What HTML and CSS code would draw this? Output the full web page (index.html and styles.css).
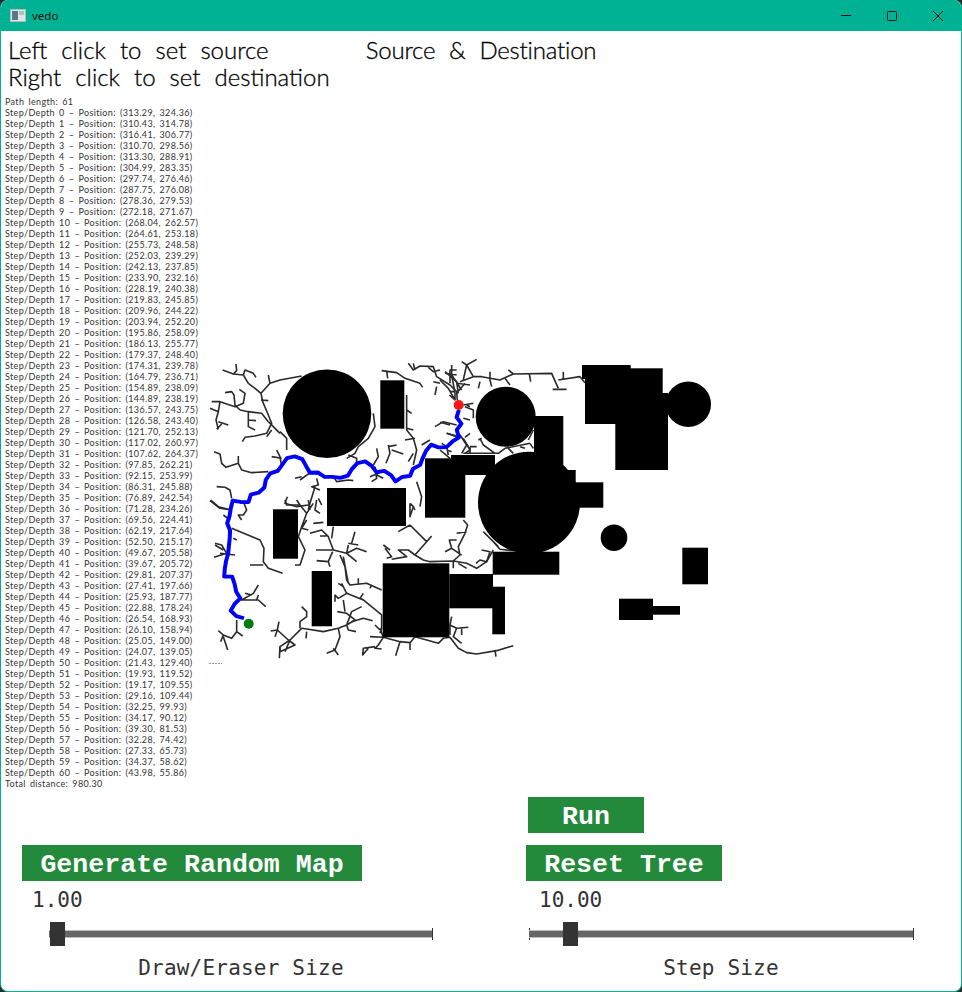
FILE: index.html
```html
<!DOCTYPE html>
<html lang="en">
<head>
    <meta charset="UTF-8">
    <meta name="viewport" content="width=device-width, initial-scale=1.0">
    <title>vedo</title>
    <link rel="stylesheet" href="styles.css">
</head>
<body>
    <div class="window">
        <header class="titlebar">
            <svg class="app-icon" width="16" height="13" viewBox="0 0 16 13">
                <rect x="0.5" y="0.5" width="15" height="12" fill="#dfe8e8" stroke="#aebcbc"/>
                <rect x="2" y="2" width="6" height="9" fill="#56788f"/>
                <rect x="9" y="2" width="5" height="4" fill="#a9c4bb"/>
            </svg>
            <span class="app-name">vedo</span>
            <div class="win-buttons">
                <svg width="12" height="12" viewBox="0 0 12 12"><path d="M1 5.5H11"/></svg>
                <svg width="12" height="12" viewBox="0 0 12 12"><rect x="1.5" y="1.5" width="9" height="9" rx="1"/></svg>
                <svg width="12" height="12" viewBox="0 0 12 12"><path d="M1 1L11 11M11 1L1 11"/></svg>
            </div>
        </header>

        <div class="headings">
            <h1>Left click to set source<br>Right click to set destination</h1>
            <h2>Source &amp; Destination</h2>
        </div>

        <div class="middle">
            <pre class="log">Path length: 61
Step/Depth 0 – Position: (313.29, 324.36)
Step/Depth 1 – Position: (310.43, 314.78)
Step/Depth 2 – Position: (316.41, 306.77)
Step/Depth 3 – Position: (310.70, 298.56)
Step/Depth 4 – Position: (313.30, 288.91)
Step/Depth 5 – Position: (304.99, 283.35)
Step/Depth 6 – Position: (297.74, 276.46)
Step/Depth 7 – Position: (287.75, 276.08)
Step/Depth 8 – Position: (278.36, 279.53)
Step/Depth 9 – Position: (272.18, 271.67)
Step/Depth 10 – Position: (268.04, 262.57)
Step/Depth 11 – Position: (264.61, 253.18)
Step/Depth 12 – Position: (255.73, 248.58)
Step/Depth 13 – Position: (252.03, 239.29)
Step/Depth 14 – Position: (242.13, 237.85)
Step/Depth 15 – Position: (233.90, 232.16)
Step/Depth 16 – Position: (228.19, 240.38)
Step/Depth 17 – Position: (219.83, 245.85)
Step/Depth 18 – Position: (209.96, 244.22)
Step/Depth 19 – Position: (203.94, 252.20)
Step/Depth 20 – Position: (195.86, 258.09)
Step/Depth 21 – Position: (186.13, 255.77)
Step/Depth 22 – Position: (179.37, 248.40)
Step/Depth 23 – Position: (174.31, 239.78)
Step/Depth 24 – Position: (164.79, 236.71)
Step/Depth 25 – Position: (154.89, 238.09)
Step/Depth 26 – Position: (144.89, 238.19)
Step/Depth 27 – Position: (136.57, 243.75)
Step/Depth 28 – Position: (126.58, 243.40)
Step/Depth 29 – Position: (121.70, 252.13)
Step/Depth 30 – Position: (117.02, 260.97)
Step/Depth 31 – Position: (107.62, 264.37)
Step/Depth 32 – Position: (97.85, 262.21)
Step/Depth 33 – Position: (92.15, 253.99)
Step/Depth 34 – Position: (86.31, 245.88)
Step/Depth 35 – Position: (76.89, 242.54)
Step/Depth 36 – Position: (71.28, 234.26)
Step/Depth 37 – Position: (69.56, 224.41)
Step/Depth 38 – Position: (62.19, 217.64)
Step/Depth 39 – Position: (52.50, 215.17)
Step/Depth 40 – Position: (49.67, 205.58)
Step/Depth 41 – Position: (39.67, 205.72)
Step/Depth 42 – Position: (29.81, 207.37)
Step/Depth 43 – Position: (27.41, 197.66)
Step/Depth 44 – Position: (25.93, 187.77)
Step/Depth 45 – Position: (22.88, 178.24)
Step/Depth 46 – Position: (26.54, 168.93)
Step/Depth 47 – Position: (26.10, 158.94)
Step/Depth 48 – Position: (25.05, 149.00)
Step/Depth 49 – Position: (24.07, 139.05)
Step/Depth 50 – Position: (21.43, 129.40)
Step/Depth 51 – Position: (19.93, 119.52)
Step/Depth 52 – Position: (19.17, 109.55)
Step/Depth 53 – Position: (29.16, 109.44)
Step/Depth 54 – Position: (32.25, 99.93)
Step/Depth 55 – Position: (34.17, 90.12)
Step/Depth 56 – Position: (39.30, 81.53)
Step/Depth 57 – Position: (32.28, 74.42)
Step/Depth 58 – Position: (27.33, 65.73)
Step/Depth 59 – Position: (34.37, 58.62)
Step/Depth 60 – Position: (43.98, 55.86)
Total distance: 980.30</pre>

            <!-- viewBox uses window coordinates so the map reads like the screenshot -->
            <svg class="map" width="520" height="320" viewBox="204 355 520 320">
                <!-- tree branches, traced at 3x from the left, lower and right parts of the map -->
                <g class="tree" transform="translate(200 350) scale(0.3333)">
                    <path d="M68 60 100 72 130 75 145 100 165 115 183 130 188 155 205 195 215 220 200 250 165 258 135 262 127 275"/>
                    <path d="M108 42 110 62 100 72M130 75 135 60 160 70 168 82M183 130 210 100 240 90 305 78M210 100 205 75M183 150 205 152"/>
                    <path d="M75 128 95 125 102 135 105 165 120 180M118 118 135 130 130 160 105 170 60 155 35 155M60 155 55 185 30 175M55 185 48 210 55 238M55 215 85 225M65 222 50 238"/>
                    <path d="M120 180 145 185 185 190 205 215M145 185 145 230 165 240M145 210 168 212"/>
                    <path d="M205 215 240 250M215 240 200 260M240 245 260 265 260 300M230 300 240 320 245 350M215 320 245 325"/>
                    <path d="M42 305 60 312 65 340 78 352 115 340 125 360 155 368 205 365M115 318 115 340"/>
                    <path d="M50 410 75 412 90 420 95 445M30 452 60 475 95 480"/>
                    <path d="M520 190 525 230 505 265 475 290 465 310 440 325M445 315 470 325 470 345"/>
                    <path d="M565 285 570 310 558 340M575 300 610 312M565 290 590 285M530 295 535 320 520 345M525 350 530 385 515 395M530 375 550 385M510 380 545 365"/>
                    <path d="M350 385 355 405 335 410 360 420M345 410 330 460 325 480M355 445 365 465M300 390 335 365 360 375M285 385 305 380M262 440 255 460 290 470 325 465"/>
                    <path d="M400 380 410 395 445 390 460 392"/>
                    <path d="M620 135 620 240 640 265 650 300 640 345M620 180 635 190M620 235 640 240M615 270 645 265M640 310 625 335M665 285 690 270"/>
                    <path d="M650 395 665 440 660 470M645 480 640 470"/>
                    <path d="M545 62 590 68 615 85 660 100 668 112M560 62 563 85M625 40 640 60 660 48 700 50 710 80 750 105 770 125 772 150M680 48 700 65 720 60M640 40 645 60M700 95 720 100M710 110 705 135"/>
                    <path d="M750 100 750 60 770 60M735 65 770 95 775 130M750 125 765 125M770 100 810 105M800 45 790 90M795 100 770 130"/>
                    <path d="M705 230 730 215 770 225M740 250 770 260M810 250 795 262M790 265 810 300 795 310M800 165 810 170M790 205 810 210"/>
                    <path d="M725 280 740 290 745 315M740 300 755 305"/>
                </g>
                <g class="tree" transform="translate(200 500) scale(0.3333)">
                    <path d="M32 0 55 20 85 28M70 45 90 60M130 5 140 30 130 45 115 45 125 60M95 85 180 120 192 145 190 185 205 205 248 220M150 195 190 195M100 115 110 120"/>
                    <path d="M45 130 65 135 80 160 42 172M60 160 105 165M45 135 70 150"/>
                    <path d="M175 255 160 280 125 300 175 300 197 320M175 285 170 300M135 280 155 285"/>
                    <path d="M110 360 110 395 95 415 70 405 55 392M70 405 62 425M70 410 83 450M110 395 128 408"/>
                    <path d="M255 0 260 15 300 15 320 40 340 10M290 0 300 15M325 0 330 30M320 40 305 80 295 110 315 150 300 195 285 195M350 0 345 30 360 40M340 70 370 67M320 60 305 85 325 90"/>
                    <path d="M330 100 365 90 385 110 400 150 440 160 470 145 500 155M400 80 395 115M360 108 380 108M348 150 370 150 400 150M350 182 385 185 398 155M385 185 390 200M440 160 470 185M455 130 465 95M445 130 475 135M440 160 445 135"/>
                    <path d="M420 165 435 200 440 240 450 255 500 250 545 270M430 170 445 250M475 235 475 255M515 255 510 265M425 250 440 280 415 295 405 285 405 305M415 250 430 260"/>
                    <path d="M440 280 490 300 545 345 545 385 540 400M490 280 480 295 490 300M430 300 435 335M412 335 440 340 465 360 440 375M485 320 455 335 440 375 415 385 370 395 325 388 305 385 270 420 240 440 238 475"/>
                    <path d="M455 365 490 355 518 362M440 375 445 390 468 395M415 385 420 410 405 450 380 460M400 445 415 465M320 395 318 415M305 320 320 335 320 350 300 365 300 385"/>
                    <path d="M237 365 232 390 212 393M232 390 225 410M232 390 265 420 285 435 240 455 240 440M270 420 255 455"/>
                    <path d="M510 410 550 412 600 425 630 428 645 410 715 430 730 415 750 412 775 445 800 458 830 462 890 452 940 437M600 425 587 467M630 428 630 450"/>
                    <path d="M550 412 535 435 525 445 545 447M525 440 490 445 488 465 505 445M550 412 540 385M525 375 540 390"/>
                    <path d="M755 350 750 375 770 385 805 382M750 375 750 405M785 385 785 405M770 385 760 410 785 430M885 450 888 470"/>
                    <path d="M630 10 630 50 640 20 630 10M630 75 595 95M630 75 680 125 695 108M680 125 645 165 625 150 595 150 620 170 575 178M645 165 670 180 690 185 760 183 800 190 830 205 860 185 880 150M570 150 550 135M555 145 575 170 560 175M760 183 760 205M775 190 800 205"/>
                    <path d="M790 60 803 75 795 100 775 140 780 165 760 183M770 100 800 95M770 120 748 120 755 145 735 155M755 145 785 165M850 95 880 125 900 148 940 152M845 150 870 155 860 185 840 180 828 190M880 125 895 140"/>
                </g>
                <g class="tree" transform="translate(440 350) scale(0.3333)">
                    <path d="M65 35 80 45 110 28M80 45 100 80 125 80 180 90 220 72 335 70 355 115M60 95 100 80M35 45 35 75 65 120M15 70 50 75M35 75 45 130 45 150 28 135M0 90 25 115 45 150"/>
                    <path d="M150 65 150 90 155 110M120 95 115 115M205 60 220 72M195 85 210 105M268 72 272 95M338 118 380 118M355 90 420 80 435 98M370 65 370 88"/>
                    <path d="M70 165 100 160M75 170 100 180 100 205M0 217 30 225M20 250 50 258 60 255 85 290M60 255 80 285 65 310M90 290 110 290M90 290 90 310"/>
                    <path d="M70 310 175 310 195 295 270 280M120 265 130 285 165 310M115 270 125 265M205 295 220 310M240 290 255 295M270 280 280 295M265 270 280 240M0 300 30 325"/>
                </g>

                <g class="obstacles">
                    <circle cx="327" cy="413.7" r="44.3"/>
                    <rect x="380.3" y="380.3" width="24" height="48.4"/>
                    <circle cx="505.7" cy="416.7" r="30"/>
                    <rect x="534" y="416" width="29.3" height="60"/>
                    <circle cx="529" cy="502.7" r="51"/>
                    <rect x="560" y="470" width="15.7" height="30"/>
                    <rect x="575" y="482.3" width="28.3" height="25.4"/>
                    <rect x="582" y="365" width="48.7" height="14"/>
                    <rect x="585" y="368.3" width="77.7" height="55.7"/>
                    <rect x="615.3" y="393" width="52.7" height="77"/>
                    <circle cx="688.3" cy="404.3" r="22.7"/>
                    <circle cx="614" cy="537.7" r="13.3"/>
                    <rect x="682.3" y="547.7" width="25.7" height="36.6"/>
                    <rect x="619" y="598.7" width="34" height="21.3"/>
                    <rect x="653" y="606" width="27" height="8.7"/>
                    <rect x="492.7" y="551.7" width="66.6" height="23"/>
                    <rect x="451" y="455" width="44" height="20"/>
                    <rect x="425" y="458.3" width="40.3" height="59.4"/>
                    <rect x="273" y="509.3" width="25" height="49.4"/>
                    <rect x="327" y="488" width="79" height="38"/>
                    <rect x="311.7" y="571" width="20.3" height="55.3"/>
                    <rect x="382.7" y="563.3" width="66.6" height="74"/>
                    <rect x="449.3" y="574" width="43.7" height="34.3"/>
                    <rect x="492.3" y="586.7" width="12.7" height="47.6"/>
                </g>

                <path class="origin" d="M209 663.5H222"/>

                <!-- the path is drawn from the logged positions -->
                <polyline class="route" transform="matrix(0.798 0 0 -0.776 208.9 661.6)" points="313.29,324.36 310.43,314.78 316.41,306.77 310.70,298.56 313.30,288.91 304.99,283.35 297.74,276.46 287.75,276.08 278.36,279.53 272.18,271.67 268.04,262.57 264.61,253.18 255.73,248.58 252.03,239.29 242.13,237.85 233.90,232.16 228.19,240.38 219.83,245.85 209.96,244.22 203.94,252.20 195.86,258.09 186.13,255.77 179.37,248.40 174.31,239.78 164.79,236.71 154.89,238.09 144.89,238.19 136.57,243.75 126.58,243.40 121.70,252.13 117.02,260.97 107.62,264.37 97.85,262.21 92.15,253.99 86.31,245.88 76.89,242.54 71.28,234.26 69.56,224.41 62.19,217.64 52.50,215.17 49.67,205.58 39.67,205.72 29.81,207.37 27.41,197.66 25.93,187.77 22.88,178.24 26.54,168.93 26.10,158.94 25.05,149.00 24.07,139.05 21.43,129.40 19.93,119.52 19.17,109.55 29.16,109.44 32.25,99.93 34.17,90.12 39.30,81.53 32.28,74.42 27.33,65.73 34.37,58.62 43.98,55.86"/>
                <circle class="source" cx="458.7" cy="405" r="5"/>
                <circle class="destination" cx="248.7" cy="623.7" r="5"/>
            </svg>
        </div>

        <div class="controls">
            <section class="panel panel-left">
                <button class="btn btn-wide">Generate Random Map</button>
                <div class="value">1.00</div>
                <div class="slider slider-left">
                    <span class="track"></span>
                    <span class="handle handle-left"></span>
                </div>
                <div class="caption">Draw/Eraser Size</div>
            </section>
            <section class="panel panel-right">
                <button class="btn btn-run">Run</button>
                <button class="btn btn-reset">Reset Tree</button>
                <div class="value">10.00</div>
                <div class="slider slider-right">
                    <span class="track"></span>
                    <span class="handle handle-right"></span>
                </div>
                <div class="caption">Step Size</div>
            </section>
        </div>
    </div>
</body>
</html>
```

FILE: styles.css
```css
* {
    box-sizing: border-box;
}
html, body {
    margin: 0;
    padding: 0;
    background-color: #2b2b2b;
    overflow: hidden;
}
.window {
    width: 962px;
    height: 992px;
    background-color: white;
    border: 1px solid #00b294;
    border-top: none;
    border-radius: 8px;
    overflow: hidden;
    color: #111;
    font-family: Lato, sans-serif;
}
.titlebar {
    display: flex;
    align-items: center;
    height: 31px;
    background-color: #00b294;
    padding-left: 9px;
}
.app-name {
    margin-left: 6px;
    font-family: "Noto Sans", sans-serif;
    font-size: 11.5px;
    color: #111;
}
.win-buttons {
    display: flex;
    gap: 34px;
    margin-left: auto;
    margin-right: 17px;
}
.win-buttons svg {
    fill: none;
    stroke: #111;
    stroke-width: 1;
}
.headings {
    display: flex;
    height: 65px;
    padding: 5px 0 0 7px;
    color: black;
}
h1, h2 {
    margin: 0;
    font-weight: 300;
    font-size: 24px;
    line-height: 27px;
    word-spacing: 7.5px;
    -webkit-text-stroke: 0.3px black;
}
h2 {
    margin-left: 36px;
    letter-spacing: -0.2px;
}
.middle {
    display: flex;
    height: 701px;
}
.log {
    margin: 0;
    width: 203px;
    flex-shrink: 0;
    padding-left: 4px;
    font-family: Lato, sans-serif;
    font-size: 9px;
    line-height: 11px;
    letter-spacing: 0.35px;
    word-spacing: 1.5px;
    color: #333;
}
.map {
    margin-top: 259px;
    flex-shrink: 0;
}
.tree path {
    fill: none;
    stroke: #2a2a2a;
    stroke-width: 4.8;
    stroke-linejoin: round;
}
.obstacles {
    fill: black;
}
.origin {
    stroke: #999;
    stroke-dasharray: 2 1;
}
.route {
    fill: none;
    stroke: #0000ff;
    stroke-width: 5;
    stroke-linejoin: round;
}
.source {
    fill: #ff1414;
}
.destination {
    fill: #037b10;
}
.controls {
    display: flex;
    height: 195px;
}
.panel {
    position: relative;
    display: flex;
    flex-direction: column;
}
.panel-left {
    width: 525px;
    padding: 48px 0 0 21px;
}
.panel-right {
    width: 435px;
}
.btn {
    display: block;
    height: 36px;
    border: none;
    padding: 3px 0 0;
    background-color: #238a3c;
    color: white;
    font-family: "Liberation Mono", monospace;
    font-weight: 700;
    font-size: 26.6px;
}
.btn-wide {
    width: 340px;
}
.btn-run {
    width: 116px;
    margin: 0 0 12px 2px;
}
.btn-reset {
    width: 196px;
}
.value {
    margin: 4px 0 0 10px;
    font-family: "DejaVu Sans Mono", monospace;
    font-size: 21px;
    line-height: 30px;
    color: #333;
}
.panel-right .value {
    margin-left: 13px;
}
.slider {
    position: relative;
    height: 24px;
    margin-top: 7px;
}
.slider-left {
    width: 384px;
    margin-left: 27px;
}
.slider-right {
    width: 385px;
    margin-left: 3px;
}
.track {
    position: absolute;
    left: 0;
    right: 0;
    top: 8px;
    height: 8px;
    background-color: #666;
    border-top: 1px solid #bbb;
    border-bottom: 1px solid #bbb;
}
.slider::after {
    content: "";
    position: absolute;
    right: 0;
    top: 6px;
    height: 12px;
    border-right: 1px solid #333;
}
.slider-right::before {
    content: "";
    position: absolute;
    left: 0;
    top: 6px;
    height: 12px;
    border-left: 1px solid #333;
}
.handle {
    position: absolute;
    top: 0;
    width: 15px;
    height: 24px;
    background-color: #333;
}
.handle-left {
    left: 1px;
}
.handle-right {
    left: 34px;
}
.caption {
    margin-top: 7px;
    font-family: "DejaVu Sans Mono", monospace;
    font-size: 21px;
    line-height: 30px;
    letter-spacing: 0.2px;
    color: #333;
    text-align: center;
}
.panel-left .caption {
    width: 438px;
}
.panel-right .caption {
    width: 390px;
}
```
